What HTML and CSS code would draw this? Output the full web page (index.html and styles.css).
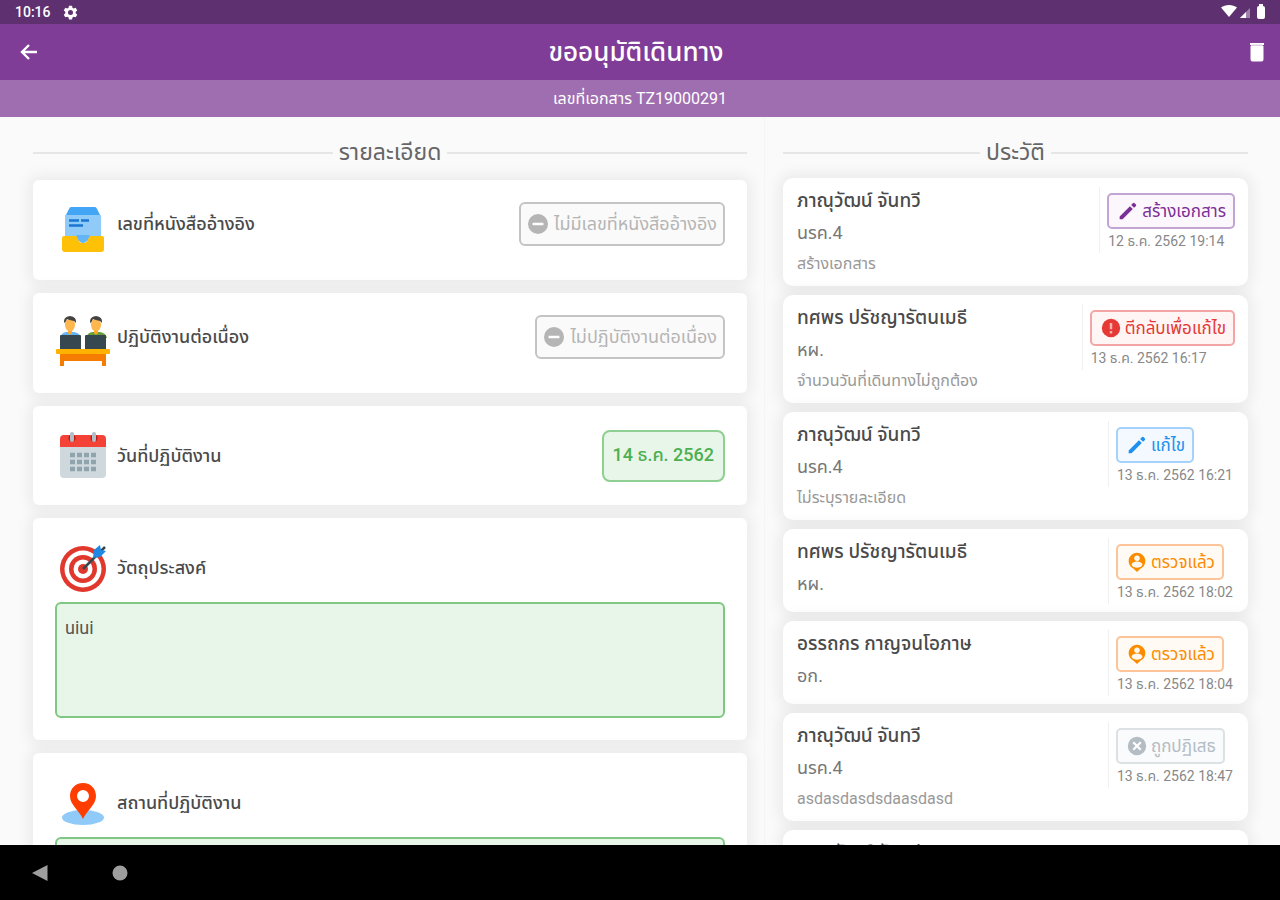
FILE: index.html
```html
<!DOCTYPE html>
<html lang="th">
<head>
<meta charset="utf-8">
<meta name="viewport" content="width=device-width, initial-scale=1">
<title>ขออนุมัติเดินทาง</title>
<link rel="stylesheet" href="styles.css">
</head>
<body>
<svg class="sprite" aria-hidden="true">
  <symbol id="pencil" viewBox="0 0 24 24"><path fill="currentColor" d="M2 18.500V22h3.500L17.800 9.700l-3.500-3.500zM21.300 6.200a1.500 1.500 0 0 0 0-2.200l-1.300-1.300a1.500 1.500 0 0 0-2.200 0l-2 2 3.500 3.500z"/></symbol>
  <symbol id="alert" viewBox="0 0 24 24"><circle cx="12" cy="12" r="11" fill="currentColor"/><path fill="#fff" fill-opacity=".6" d="M10.500 6h3v7.500h-3zM10.500 15.500h3v3h-3z"/></symbol>
  <symbol id="person" viewBox="0 0 24 24"><path fill="currentColor" d="M12 1a10 10 0 0 0-4 19.200L12 24l4-3.800A10 10 0 0 0 12 1z"/><circle cx="12" cy="7.500" r="3.300" fill="#fff8ef"/><path fill="#fff8ef" d="M5.500 15.500c0-3 4.300-4 6.500-4s6.500 1 6.500 4a7.800 7.800 0 0 1-13 0z"/></symbol>
  <symbol id="cross" viewBox="0 0 24 24"><circle cx="12" cy="12" r="11" fill="currentColor"/><path stroke="#fff" stroke-width="2.600" d="M7.500 7.500l9 9M16.500 7.500l-9 9"/></symbol>
  <symbol id="minus" viewBox="0 0 24 24"><circle cx="12" cy="12" r="12" fill="currentColor"/><path fill="#fff" d="M5.500 10.500h13v3h-13z"/></symbol>
</svg>

<div class="screen">
  <div class="status">
    <span class="status-time">10:16</span>
    <svg class="status-gear" viewBox="0 0 24 24"><path fill="#fff" fill-rule="evenodd" d="M9.500 1h5l.6 3.200 2 1.200 3.200-1 2.500 4.300-2.500 2.200v2.300l2.500 2.200-2.500 4.300-3.200-1-2 1.200-.6 3.200h-5l-.6-3.200-2-1.200-3.200 1-2.500-4.300 2.500-2.200v-2.300L1.200 8.700l2.500-4.300 3.200 1 2-1.200zM12 8a4 4 0 1 0 0 8 4 4 0 0 0 0-8z"/></svg>
    <svg class="status-signals" viewBox="0 0 46 16"><path fill="#fff" d="M0 3.500C4 0 12 0 16 3.500L8 13z"/><path fill="#fff" fill-opacity=".4" d="M29 4v10H19z"/><path fill="#fff" d="M25 8v6h-6z"/><path fill="#fff" d="M38 2V0h4v2q2 0 2 2v9q0 2-2 2h-4q-2 0-2-2V4q0-2 2-2z"/></svg>
  </div>

  <header class="appbar">
    <button class="icon-button" aria-label="ย้อนกลับ"><svg viewBox="0 0 18 18"><path fill="none" stroke="#fff" stroke-width="2.400" d="M17 9H2.500M9 2L2 9l7 7"/></svg></button>
    <h1 class="appbar-title">ขออนุมัติเดินทาง</h1>
    <button class="icon-button icon-button-end" aria-label="ลบ"><svg viewBox="0 0 18 20"><path fill="#fff" d="M2 1h14v2H2zM2.500 4h13v13.500q0 2-2 2h-9q-2 0-2-2z"/><path fill="#ddd0e4" d="M3 2.500h12v1.500H3z"/></svg></button>
  </header>
  <p class="docno">เลขที่เอกสาร TZ19000291</p>

  <main class="main">
    <section class="details">
      <h2 class="heading">รายละเอียด</h2>
      <div class="card">
        <div class="field field-tagged">
          <svg class="field-icon" viewBox="0 0 54 54"><path fill="#90caf9" d="M9 17L14 5h26l5 12v22H9z"/><path fill="#90caf9" d="M9 13h36v10H9z"/><path fill="#42a5f5" d="M10 13l3-6q1-2 3-2h22q2 0 3 2l3 6z"/><path fill="#ffc107" d="M6 36q0-2 2-2h12q1 0 1.500 2 1 5 5.500 5t5.500-5q.5-2 1.500-2h12q2 0 2 2v11q0 3-3 3H9q-3 0-3-3z"/><path fill="#64b5f6" d="M20 33h14l-2 4q-2 4-5 4t-5-4z"/><path stroke="#1976d2" stroke-width="2.500" d="M13 18.500h10M25 18.500h8M13 23.500h14"/></svg>
          <span class="field-label">เลขที่หนังสืออ้างอิง</span>
          <span class="tag"><svg><use href="#minus"/></svg>ไม่มีเลขที่หนังสืออ้างอิง</span>
        </div>
      </div>
      <div class="card">
        <div class="field field-tagged">
          <svg class="field-icon" viewBox="0 0 54 54"><path fill="#64b5f6" d="M4 23q1-5 6-6h8q6 1 7 6z"/><path fill="#689f38" d="M30 23q1-5 6-6h8q6 1 7 6z"/><path fill="#ffa726" d="M12 14h4v4q-2 3-4 0zM38 14h4v4q-2 3-4 0z"/><ellipse cx="14" cy="10" rx="5" ry="6.500" fill="#ffb74d"/><ellipse cx="40" cy="10" rx="5" ry="6.500" fill="#ffb74d"/><path fill="#424242" d="M8 8q-1-6 6-7 7 1 6 7l-2-2q-5-1-7-2-1 3-3 4zM34 8q-1-6 6-7 7 1 6 7l-2-2q-5-1-7-2-1 3-3 4z"/><rect x="4" y="20" width="21" height="15" rx="1" fill="#37474f"/><rect x="29" y="20" width="21" height="15" rx="1" fill="#37474f"/><path fill="#f57c00" d="M4 37h46v14h-4v-5H8v5H4z"/><rect y="34" width="54" height="5" rx="1" fill="#ffb300"/></svg>
          <span class="field-label">ปฏิบัติงานต่อเนื่อง</span>
          <span class="tag"><svg><use href="#minus"/></svg>ไม่ปฏิบัติงานต่อเนื่อง</span>
        </div>
      </div>
      <div class="card">
        <div class="field">
          <svg class="field-icon" viewBox="0 0 54 54"><path fill="#cfd8dc" d="M4 16h46v29q0 4-4 4H8q-4 0-4-4z"/><path fill="#f44336" d="M4 18v-8q0-4 4-4h38q4 0 4 4v8z"/><circle cx="16" cy="9" r="3.500" fill="#b71c1c"/><circle cx="38" cy="9" r="3.500" fill="#b71c1c"/><rect x="14" y="3" width="4" height="10" rx="2" fill="#b0bec5"/><rect x="36" y="3" width="4" height="10" rx="2" fill="#b0bec5"/><path stroke="#90a4ae" stroke-width="4.500" stroke-dasharray="5 2" d="M14 26h26M14 33h26M14 40h26"/></svg>
          <span class="field-label">วันที่ปฏิบัติงาน</span>
          <button class="date">14 ธ.ค. 2562</button>
        </div>
      </div>
      <div class="card">
        <div class="field">
          <svg class="field-icon" viewBox="0 0 54 54"><circle cx="27" cy="28" r="23" fill="#e0382c"/><circle cx="27" cy="28" r="18.500" fill="#fff"/><circle cx="27" cy="28" r="14" fill="#e0382c"/><circle cx="27" cy="28" r="9.500" fill="#fff"/><circle cx="27" cy="28" r="5" fill="#e0382c"/><path stroke="#37474f" stroke-width="2.500" d="M27 28l19-19 3-3"/><path fill="#1e88e5" d="M37 17l1-8 6-5 1 5 5 1-6 6z"/></svg>
          <label class="field-label" for="objective">วัตถุประสงค์</label>
        </div>
        <textarea class="note" id="objective">uiui</textarea>
      </div>
      <div class="card">
        <div class="field">
          <svg class="field-icon" viewBox="0 0 54 54"><ellipse cx="27" cy="41.500" rx="21" ry="7.500" fill="#90caf9"/><path fill="#ff3d00" fill-rule="evenodd" d="M27 7C19 7 14 13 14 20c0 9 9 14 13 23 4-9 13-14 13-23 0-7-5-13-13-13zm0 7a6 6 0 1 1 0 12 6 6 0 0 1 0-12z"/></svg>
          <label class="field-label" for="place">สถานที่ปฏิบัติงาน</label>
        </div>
        <textarea class="note" id="place"></textarea>
      </div>
    </section>

    <section class="history">
      <h2 class="heading">ประวัติ</h2>
      <article class="entry">
        <div class="entry-text"><h3>ภาณุวัฒน์ จันทวี</h3><p class="role">นรค.4</p><p class="remark">สร้างเอกสาร</p></div>
        <div class="entry-side"><span class="chip purple"><svg><use href="#pencil"/></svg>สร้างเอกสาร</span><time>12 ธ.ค. 2562 19:14</time></div>
      </article>
      <article class="entry">
        <div class="entry-text"><h3>ทศพร ปรัชญารัตนเมธี</h3><p class="role">หผ.</p><p class="remark">จำนวนวันที่เดินทางไม่ถูกต้อง</p></div>
        <div class="entry-side"><span class="chip red"><svg><use href="#alert"/></svg>ตีกลับเพื่อแก้ไข</span><time>13 ธ.ค. 2562 16:17</time></div>
      </article>
      <article class="entry">
        <div class="entry-text"><h3>ภาณุวัฒน์ จันทวี</h3><p class="role">นรค.4</p><p class="remark">ไม่ระบุรายละเอียด</p></div>
        <div class="entry-side"><span class="chip blue"><svg><use href="#pencil"/></svg>แก้ไข</span><time>13 ธ.ค. 2562 16:21</time></div>
      </article>
      <article class="entry">
        <div class="entry-text"><h3>ทศพร ปรัชญารัตนเมธี</h3><p class="role">หผ.</p></div>
        <div class="entry-side"><span class="chip orange"><svg><use href="#person"/></svg>ตรวจแล้ว</span><time>13 ธ.ค. 2562 18:02</time></div>
      </article>
      <article class="entry">
        <div class="entry-text"><h3>อรรถกร กาญจนโอภาษ</h3><p class="role">อก.</p></div>
        <div class="entry-side"><span class="chip orange"><svg><use href="#person"/></svg>ตรวจแล้ว</span><time>13 ธ.ค. 2562 18:04</time></div>
      </article>
      <article class="entry">
        <div class="entry-text"><h3>ภาณุวัฒน์ จันทวี</h3><p class="role">นรค.4</p><p class="remark">asdasdasdsdaasdasd</p></div>
        <div class="entry-side"><span class="chip gray"><svg><use href="#cross"/></svg>ถูกปฏิเสธ</span><time>13 ธ.ค. 2562 18:47</time></div>
      </article>
      <article class="entry">
        <div class="entry-text"><h3>ภาณุวัฒน์ จันทวี</h3></div>
      </article>
    </section>
  </main>

  <nav class="navbar">
    <button class="nav-button" aria-label="Back"><svg viewBox="0 0 18 18"><path fill="#9e9e9e" d="M16.500 1v16L1 9z"/></svg></button>
    <button class="nav-button" aria-label="Home"><svg viewBox="0 0 18 18"><circle cx="9" cy="9" r="7.500" fill="#9e9e9e"/></svg></button>
  </nav>
</div>
</body>
</html>
```
FILE: styles.css
```css
* { box-sizing: border-box; }
body, h1, h2, h3, p { margin: 0; }
body {
  font-family: Roboto, "Noto Sans Thai", "Liberation Sans", sans-serif;
  background: #fafafa;
  color: #4a4a4a;
}
button { padding: 0; border: 0; background: none; font: inherit; }
svg { display: block; flex: none; }
.sprite { display: none; }

.screen { display: flex; flex-direction: column; height: 100vh; overflow: hidden; }

.status {
  display: flex; align-items: center; flex: none;
  height: 24px; padding: 0 13px 0 15px; gap: 12px;
  background: #5e306f; color: #fff;
}
.status-time { font-size: 14px; font-weight: 500; line-height: 24px; }
.status-gear { width: 15px; height: 15px; }
.status-signals { width: 46px; height: 16px; margin-left: auto; }

.appbar {
  display: flex; align-items: center; justify-content: space-between; flex: none;
  height: 56px; padding: 0 14px 0 20px;
  background: #803d97; color: #fff;
}
.appbar-title { font-size: 26px; font-weight: 500; line-height: 40px; }
.icon-button { width: 18px; }
.icon-button svg { width: 18px; height: 18px; }
.icon-button-end { display: flex; justify-content: flex-end; width: 32px; }
.icon-button-end svg { height: 20px; }
.docno {
  flex: none; height: 37px;
  background: #9f6eb0; color: #fff;
  font-size: 16px; line-height: 37px; text-align: center;
}

.main { display: grid; grid-template-columns: 765fr 515fr; flex: 1; min-height: 0; }
.details, .history { display: flex; flex-direction: column; min-height: 0; overflow: hidden; }
.details { padding: 18px 17px 0 33px; gap: 13px; border-right: 1px solid #f5f5f5; }
.history { padding: 18px 32px 0 18px; gap: 9px; }

.heading {
  display: flex; align-items: center; gap: 6px;
  height: 36px; flex: none;
  color: #666; font-size: 23px; font-weight: 400; line-height: 36px;
}
.details .heading { margin-bottom: -4px; }
.history .heading { margin-bottom: -2px; }
.heading::before, .heading::after { content: ""; flex: 1; height: 2px; background: #e6e6e6; }

.card {
  flex: none; padding: 22px;
  background: #fff; border-radius: 6px;
  box-shadow: 0 0 14px 5px rgba(0, 0, 0, .06);
}
.field { display: flex; align-items: center; min-height: 55px; }
.field-icon { width: 56px; height: 54px; }
.field-label { margin-left: 6px; font-size: 18px; font-weight: 500; line-height: 44px; }
.field-tagged { align-items: flex-start; min-height: 56px; }
.tag {
  display: flex; align-items: center; gap: 6px;
  height: 44px; margin-left: auto; padding: 0 6px 0 7px;
  border: 2px solid #c4c4c4; border-radius: 6px;
  background: #fafafa; color: #b5b5b5;
  font-size: 18px; line-height: 40px; white-space: nowrap;
}
.tag svg { width: 20px; height: 20px; }
.date {
  height: 52px; margin-left: auto; padding: 0 9px;
  border: 2px solid #8ecf92; border-radius: 8px;
  background: #e8f5e9; color: #4caf50;
  font-size: 18px; font-weight: 500;
}
.note {
  display: block; width: 100%; height: 116px; margin-top: 7px; padding: 10px 8px;
  border: 2px solid #81c784; border-radius: 6px; outline: 0; resize: none;
  background: #e8f5e9; color: #555;
  font: 400 18px/28px Roboto, sans-serif;
}

.entry {
  display: flex; justify-content: space-between; align-items: flex-start; flex: none;
  min-height: 83px; padding: 7px 13px 7px 14px;
  background: #fff; border-radius: 10px;
  box-shadow: 0 0 14px 5px rgba(0, 0, 0, .06);
}
.entry h3 { font-size: 19px; font-weight: 500; line-height: 32px; }
.role { color: #777; font-size: 18px; line-height: 32px; }
.remark { color: #999; font-size: 16px; line-height: 30px; }
.entry-side {
  display: flex; flex-direction: column; align-items: flex-start;
  margin-top: 2px; padding: 6px 0 0 7px;
  border-left: 1px solid #f0f0f0;
}
.entry-side time { padding: 0 2px 0 1px; color: #888; font-size: 14px; line-height: 24px; white-space: nowrap; }
.chip {
  display: flex; align-items: center; gap: 4px;
  height: 36px; padding: 0 7px 0 9px;
  border: 2px solid; border-radius: 5px;
  font-size: 17px; line-height: 32px; white-space: nowrap;
}
.chip svg { width: 20px; height: 20px; }
.purple { background: #fbf7fc; border-color: #c3a5d3; color: #7b2f96; }
.red { background: #fff5f5; border-color: #f3a5a5; color: #e53935; }
.blue { background: #f3f9ff; border-color: #a5d1fa; color: #2090ee; }
.orange { background: #fffaf3; border-color: #fdc49a; color: #fb8c00; }
.gray { background: #f9fbfc; border-color: #dce1e4; color: #b4bcc4; }

.navbar { display: flex; align-items: center; flex: none; gap: 62px; height: 55px; padding: 0 31px; background: #000; }
.nav-button svg { width: 18px; height: 18px; }
```
